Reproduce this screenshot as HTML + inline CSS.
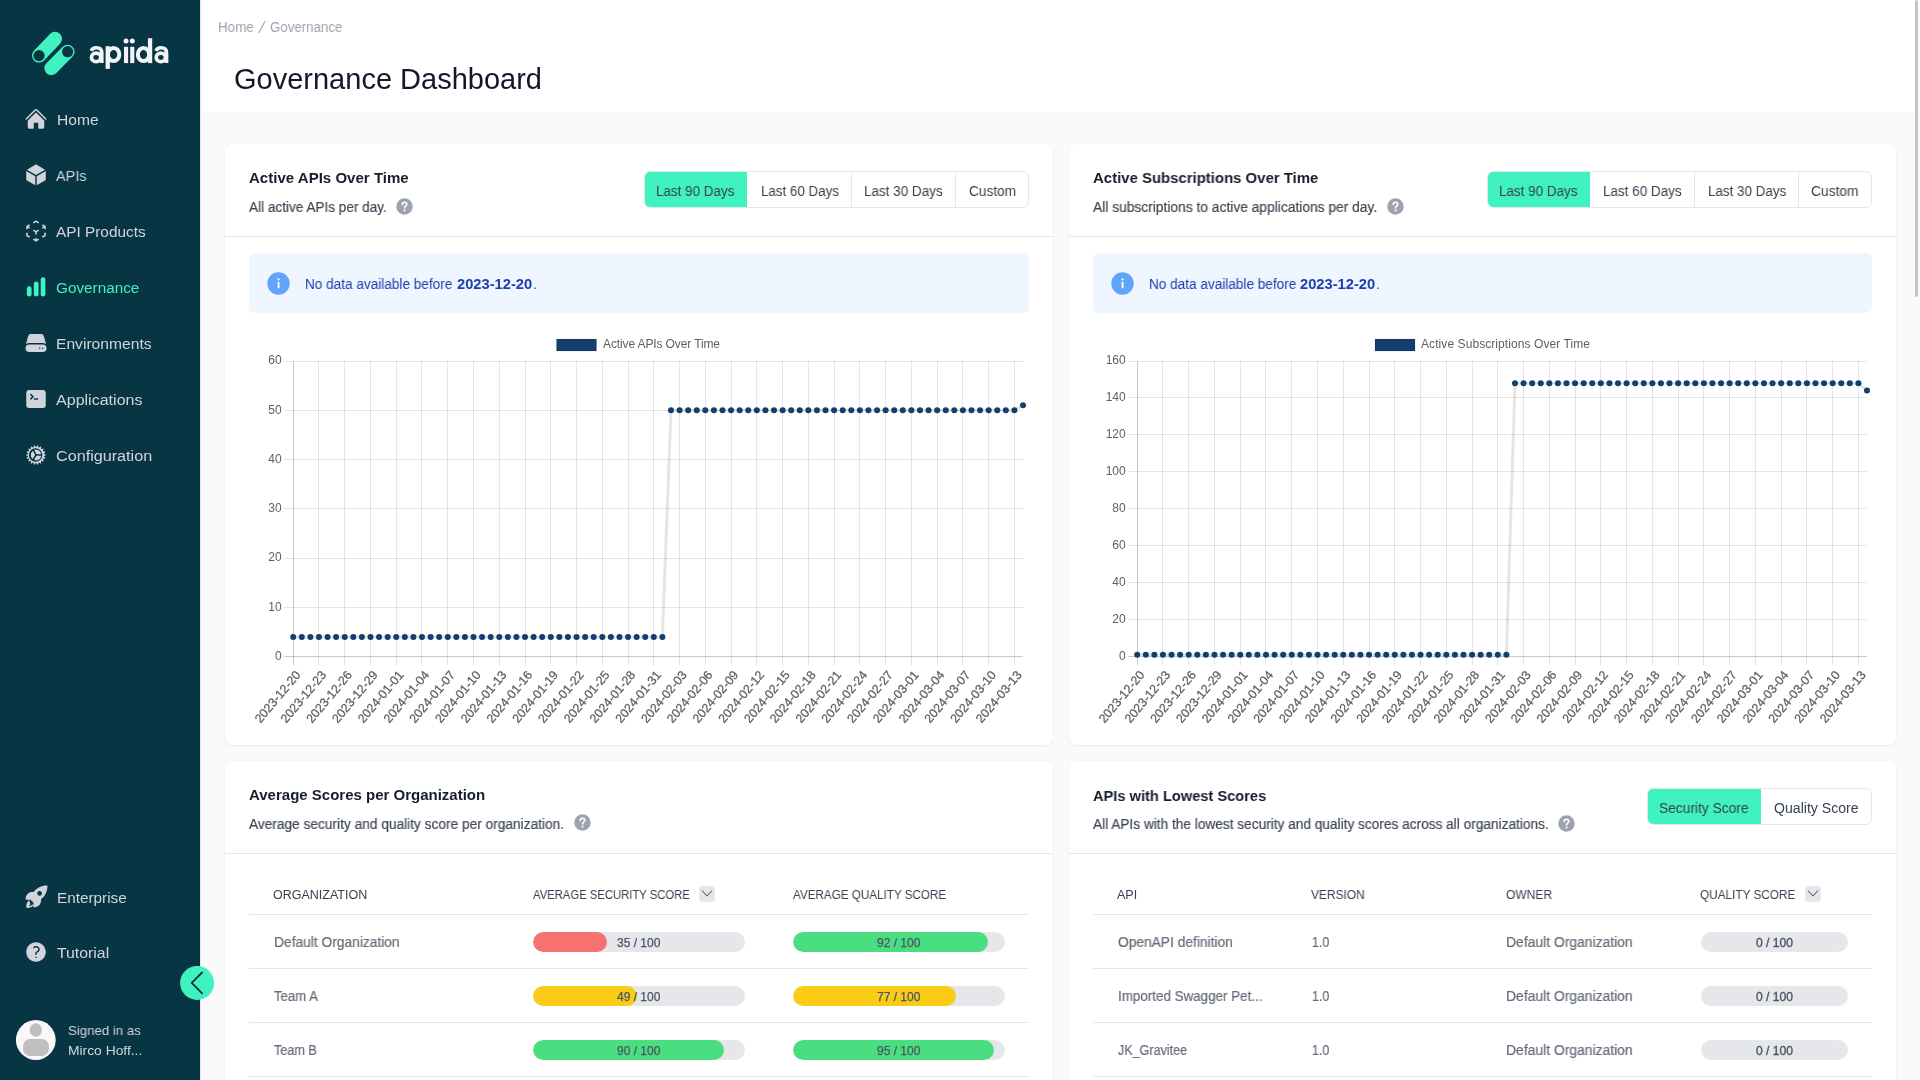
<!DOCTYPE html><html><head><meta charset="utf-8"><style>
*{box-sizing:border-box;margin:0;padding:0}
html,body{width:1920px;height:1080px;overflow:hidden;background:#f9fafb;font-family:"Liberation Sans",sans-serif;}
.abs{position:absolute}
.t{position:absolute;line-height:1;white-space:nowrap;transform-origin:0 0;will-change:transform}
.ico{position:absolute;width:24px;height:24px}
.card{position:absolute;background:#fff;border-radius:8px;box-shadow:0 1px 3px rgba(0,0,0,0.05),0 0 0 1px rgba(0,0,0,0.012)}
.hr{position:absolute;height:1px;background:#e5e7eb}
.box{position:absolute;border:1px solid #e5e7eb;border-radius:6px;overflow:hidden;background:#fff}
.help{position:absolute;width:16.5px;height:16.5px;border-radius:50%;background:#9ca3af}
.bar{position:absolute;height:20px;border-radius:10px;background:#e5e7eb;overflow:hidden}
.bar .f{position:absolute;left:0;top:0;height:20px;border-radius:10px}
.chev{position:absolute;width:16px;height:16px;border-radius:3px;background:#e5e7eb}
</style></head><body>

<div class="abs" style="left:0;top:0;width:200px;height:1080px;background:#083543"></div>
<svg class="abs" style="left:0;top:0" width="200" height="100" viewBox="0 0 200 100">
<g stroke="#3ff2c0" stroke-width="14" stroke-linecap="round">
<line x1="39" y1="55.6" x2="55" y2="38.8"/>
<line x1="67.6" y1="51.7" x2="51.4" y2="68.2"/>
</g>
<circle cx="39" cy="55.6" r="5.6" fill="#083543"/>
<circle cx="67.6" cy="51.7" r="5.6" fill="#083543"/>
<g fill="none" stroke="#f3f4f6" stroke-width="3.7">
<ellipse cx="96.1" cy="57.4" rx="4.6" ry="4.2"/>
<path d="M91.2 50.8 C92 48.7 93.9 47.75 96.4 47.75 C99.9 47.75 101.75 49.6 101.75 52.8 V63.1"/>
<ellipse cx="96.1" cy="57.4" rx="4.6" ry="4.2" transform="translate(64.75 0)"/>
<path d="M91.2 50.8 C92 48.7 93.9 47.75 96.4 47.75 C99.9 47.75 101.75 49.6 101.75 52.8 V63.1" transform="translate(64.75 0)"/>
</g>
<g fill="none" stroke="#f3f4f6" stroke-width="4">
<ellipse cx="113.6" cy="54.5" rx="5.7" ry="6.5"/>
<ellipse cx="143.5" cy="54.5" rx="5.65" ry="6.5"/>
</g>
<g fill="#f3f4f6">
<rect x="105.6" y="46.2" width="4.3" height="22.7"/>
<rect x="124" y="46.8" width="4.1" height="16.3"/>
<rect x="130.2" y="46.8" width="4.1" height="16.3"/>
<rect x="147.9" y="38.25" width="4.3" height="24.85"/>
<circle cx="126" cy="41" r="2.5"/><circle cx="132.25" cy="41" r="2.5"/>
</g>
</svg>
<svg class="ico" style="left:24px;top:107px;fill:#d1d5db" viewBox="0 0 24 24"><path d="M11.47 3.841a.75.75 0 0 1 1.06 0l8.69 8.69a.75.75 0 1 0 1.06-1.061l-8.689-8.69a2.25 2.25 0 0 0-3.182 0l-8.69 8.69a.75.75 0 1 0 1.061 1.06l8.69-8.689Z"/><path d="m12 5.432 8.159 8.159c.03.03.06.058.091.086v6.198c0 1.035-.84 1.875-1.875 1.875H15a.75.75 0 0 1-.75-.75v-4.5a.75.75 0 0 0-.75-.75h-3a.75.75 0 0 0-.75.75V21a.75.75 0 0 1-.75.75H5.625a1.875 1.875 0 0 1-1.875-1.875v-6.198a2.29 2.29 0 0 0 .091-.086L12 5.432Z"/></svg>
<div class="t" style="left:56.60px;top:112.05px;font-size:15.3px;color:#d1d5db;font-weight:normal;transform:scaleX(1.0232);">Home</div>
<svg class="ico" style="left:24px;top:163px;fill:#d1d5db" viewBox="0 0 24 24"><path d="M12.378 1.602a.75.75 0 0 0-.756 0L3 6.632l9 5.25 9-5.25-8.622-5.03ZM21.75 7.93l-9 5.25v9l8.628-5.032a.75.75 0 0 0 .372-.648V7.93ZM11.25 22.18v-9l-9-5.25v8.57a.75.75 0 0 0 .372.648l8.628 5.033Z"/></svg>
<div class="t" style="left:55.80px;top:167.85px;font-size:15.3px;color:#d1d5db;font-weight:normal;transform:scaleX(0.9432);">APIs</div>
<svg class="ico" style="left:24px;top:219px;fill:#d1d5db" viewBox="0 0 24 24"><path fill-rule="evenodd" d="M11.622 1.602a.75.75 0 0 1 .756 0l2.25 1.313a.75.75 0 0 1-.756 1.295L12 3.118 10.128 4.21a.75.75 0 1 1-.756-1.295l2.25-1.313ZM5.898 5.81a.75.75 0 0 1-.27 1.025l-1.14.665 1.14.665a.75.75 0 1 1-.756 1.295L3.75 8.806v.944a.75.75 0 0 1-1.5 0V7.5a.75.75 0 0 1 .372-.648l2.25-1.312a.75.75 0 0 1 1.026.27Zm12.204 0a.75.75 0 0 1 1.026-.27l2.25 1.312a.75.75 0 0 1 .372.648v2.25a.75.75 0 0 1-1.5 0v-.944l-1.122.654a.75.75 0 1 1-.756-1.295l1.14-.665-1.14-.665a.75.75 0 0 1-.27-1.025Zm-9 5.25a.75.75 0 0 1 1.026-.27L12 11.882l1.872-1.092a.75.75 0 1 1 .756 1.295l-1.878 1.096V15a.75.75 0 0 1-1.5 0v-1.82l-1.878-1.095a.75.75 0 0 1-.27-1.025ZM3 13.5a.75.75 0 0 1 .75.75v1.82l1.878 1.095a.75.75 0 1 1-.756 1.295l-2.25-1.312a.75.75 0 0 1-.372-.648v-2.25A.75.75 0 0 1 3 13.5Zm18 0a.75.75 0 0 1 .75.75v2.25a.75.75 0 0 1-.372.648l-2.25 1.312a.75.75 0 1 1-.756-1.295l1.878-1.096V14.25a.75.75 0 0 1 .75-.75Zm-9 5.25a.75.75 0 0 1 .75.75v.944l1.122-.654a.75.75 0 1 1 .756 1.295l-2.25 1.312a.75.75 0 0 1-.756 0l-2.25-1.312a.75.75 0 1 1 .756-1.295l1.122.654V19.5a.75.75 0 0 1 .75-.75Z" clip-rule="evenodd"/></svg>
<div class="t" style="left:55.80px;top:223.75px;font-size:15.3px;color:#d1d5db;font-weight:normal;transform:scaleX(1.0036);">API Products</div>
<svg class="abs" style="left:0;top:0" width="200" height="300" viewBox="0 0 200 300"><g fill="#3ff2c0"><rect x="26.85" y="286.2" width="4.7" height="10.4" rx="2.35"/><rect x="33.85" y="281.4" width="4.7" height="15.2" rx="2.35"/><rect x="40.7" y="277.2" width="4.7" height="19.4" rx="2.35"/></g></svg>
<div class="t" style="left:56.25px;top:279.95px;font-size:15.3px;color:#3ff2c0;font-weight:normal;transform:scaleX(0.9972);">Governance</div>
<svg class="ico" style="left:24px;top:331px;fill:#d1d5db" viewBox="0 0 24 24"><path d="M4.08 5.227A3 3 0 0 1 6.979 3H17.02a3 3 0 0 1 2.9 2.227l2.113 7.926A5.228 5.228 0 0 0 18.75 12H5.25a5.228 5.228 0 0 0-3.284 1.153L4.08 5.227Z"/><path fill-rule="evenodd" d="M5.25 13.5a3.75 3.75 0 1 0 0 7.5h13.5a3.75 3.75 0 1 0 0-7.5H5.25Zm10.5 4.5a.75.75 0 1 0 0-1.5.75.75 0 0 0 0 1.5Zm3.75-.75a.75.75 0 1 1-1.5 0 .75.75 0 0 1 1.5 0Z" clip-rule="evenodd"/></svg>
<div class="t" style="left:56.20px;top:335.85px;font-size:15.3px;color:#d1d5db;font-weight:normal;transform:scaleX(1.0218);">Environments</div>
<svg class="ico" style="left:24px;top:387px;fill:#d1d5db" viewBox="0 0 24 24"><path fill-rule="evenodd" d="M2.25 6a3 3 0 0 1 3-3h13.5a3 3 0 0 1 3 3v12a3 3 0 0 1-3 3H5.25a3 3 0 0 1-3-3V6Zm3.97.97a.75.75 0 0 1 1.06 0l2.25 2.25a.75.75 0 0 1 0 1.06l-2.25 2.25a.75.75 0 0 1-1.06-1.06l1.72-1.72-1.72-1.72a.75.75 0 0 1 0-1.06Zm4.28 4.28a.75.75 0 0 0 0 1.5h3a.75.75 0 0 0 0-1.5h-3Z" clip-rule="evenodd"/></svg>
<div class="t" style="left:56.20px;top:391.95px;font-size:15.3px;color:#d1d5db;font-weight:normal;transform:scaleX(1.0489);">Applications</div>
<svg class="ico" style="left:24px;top:443px;fill:#d1d5db" viewBox="0 0 24 24"><path d="M17.004 10.407c.138.435-.216.842-.672.842h-3.465a.75.75 0 0 1-.65-.375l-1.732-3c-.229-.396-.053-.907.393-1.004a5.252 5.252 0 0 1 6.126 3.537ZM8.12 8.464c.307-.338.838-.235 1.066.16l1.732 3a.75.75 0 0 1 0 .75l-1.732 3c-.229.397-.76.5-1.067.161A5.23 5.23 0 0 1 6.75 12a5.23 5.23 0 0 1 1.37-3.536ZM10.878 17.13c-.447-.098-.623-.608-.394-1.004l1.733-3.002a.75.75 0 0 1 .65-.375h3.465c.457 0 .81.407.672.842a5.252 5.252 0 0 1-6.126 3.539Z"/><path fill-rule="evenodd" d="M21 12.75a.75.75 0 1 0 0-1.5h-.783a8.22 8.22 0 0 0-.237-1.357l.734-.267a.75.75 0 1 0-.513-1.41l-.735.268a8.24 8.24 0 0 0-.689-1.192l.6-.503a.75.75 0 1 0-.964-1.149l-.6.504a8.3 8.3 0 0 0-1.054-.885l.391-.678a.75.75 0 1 0-1.299-.75l-.39.676a8.188 8.188 0 0 0-1.295-.47l.136-.77a.75.75 0 0 0-1.477-.26l-.136.77a8.36 8.36 0 0 0-1.377 0l-.136-.77a.75.75 0 1 0-1.477.26l.136.77c-.448.121-.88.28-1.294.47l-.39-.676a.75.75 0 0 0-1.3.75l.392.678a8.29 8.29 0 0 0-1.054.885l-.6-.504a.75.75 0 1 0-.965 1.149l.6.503a8.243 8.243 0 0 0-.689 1.192L3.8 8.216a.75.75 0 1 0-.513 1.41l.735.267a8.222 8.222 0 0 0-.238 1.356h-.783a.75.75 0 0 0 0 1.5h.783c.042.464.122.917.238 1.356l-.735.268a.75.75 0 0 0 .513 1.41l.735-.268c.197.417.428.816.69 1.191l-.6.504a.75.75 0 0 0 .963 1.15l.601-.505c.326.323.679.62 1.054.885l-.392.68a.75.75 0 0 0 1.3.75l.39-.679c.414.192.847.35 1.294.471l-.136.77a.75.75 0 0 0 1.477.261l.137-.772a8.332 8.332 0 0 0 1.376 0l.136.772a.75.75 0 1 0 1.477-.26l-.136-.771a8.19 8.19 0 0 0 1.294-.47l.391.677a.75.75 0 0 0 1.3-.75l-.393-.679a8.29 8.29 0 0 0 1.054-.885l.601.504a.75.75 0 0 0 .964-1.15l-.6-.503c.261-.375.492-.774.69-1.191l.735.267a.75.75 0 1 0 .512-1.41l-.734-.267c.115-.439.195-.892.237-1.356h.784Zm-2.657-.75a6.75 6.75 0 1 1-13.5 0 6.75 6.75 0 0 1 13.5 0Z" clip-rule="evenodd"/></svg>
<div class="t" style="left:56.20px;top:447.55px;font-size:15.3px;color:#d1d5db;font-weight:normal;transform:scaleX(1.0567);">Configuration</div>
<svg class="ico" style="left:23.5px;top:884px;fill:#d1d5db;width:25px;height:25px" viewBox="0 0 24 24"><path fill-rule="evenodd" d="M9.315 7.584C12.195 3.883 16.695 1.5 21.75 1.5a.75.75 0 0 1 .75.75c0 5.056-2.383 9.555-6.084 12.436A6.75 6.75 0 0 1 9.75 22.5a.75.75 0 0 1-.75-.75v-4.131A15.838 15.838 0 0 1 6.382 15H2.25a.75.75 0 0 1-.75-.75 6.75 6.75 0 0 1 7.815-6.666ZM15 6.75a2.25 2.25 0 1 0 0 4.5 2.25 2.25 0 0 0 0-4.5Z" clip-rule="evenodd"/><path d="M5.26 17.242a.75.75 0 1 0-1.06-1.06 7.5 7.5 0 0 0-1.964 5.86.75.75 0 0 0 .836.835 7.5 7.5 0 0 0 5.86-1.963.75.75 0 1 0-1.06-1.06 6 6 0 0 1-3.15 1.625 6 6 0 0 1 1.538-2.237Z"/></svg>
<div class="t" style="left:56.70px;top:889.95px;font-size:15.3px;color:#d1d5db;font-weight:normal;transform:scaleX(0.9962);">Enterprise</div>
<svg class="ico" style="left:24px;top:940px;fill:#d1d5db" viewBox="0 0 24 24"><path fill-rule="evenodd" d="M2.25 12c0-5.385 4.365-9.75 9.75-9.75s9.75 4.365 9.75 9.75-4.365 9.75-9.75 9.75S2.25 17.385 2.25 12Zm11.378-3.917c-.89-.777-2.366-.777-3.255 0a.75.75 0 0 1-.988-1.129c1.454-1.272 3.776-1.272 5.23 0 1.513 1.324 1.513 3.518 0 4.842a3.75 3.75 0 0 1-.837.552c-.676.328-1.028.774-1.028 1.152v.75a.75.75 0 0 1-1.5 0v-.75c0-1.279 1.06-2.107 1.875-2.502.182-.088.351-.199.503-.331.83-.727.83-1.857 0-2.584ZM12 18a.75.75 0 1 0 0-1.5.75.75 0 0 0 0 1.5Z" clip-rule="evenodd"/></svg>
<div class="t" style="left:56.70px;top:945.35px;font-size:15.3px;color:#d1d5db;font-weight:normal;transform:scaleX(1.0339);">Tutorial</div>
<svg class="abs" style="left:16px;top:1020px" width="40" height="40" viewBox="0 0 40 40"><circle cx="19.8" cy="20" r="19.9" fill="#f9f9f9"/><g fill="#bfbfbf"><ellipse cx="19.8" cy="10" rx="6.1" ry="6.8"/><rect x="7" y="18.9" width="25.9" height="17.2" rx="7"/></g></svg>
<div class="t" style="left:68.10px;top:1024.19px;font-size:13.6px;color:#d1d5db;font-weight:normal;transform:scaleX(0.9737);">Signed in as</div>
<div class="t" style="left:68.10px;top:1044.39px;font-size:13.6px;color:#d1d5db;font-weight:normal;transform:scaleX(1.0174);">Mirco Hoff...</div>
<div class="abs" style="left:200px;top:0;width:1px;height:1080px;background:#e5e7eb"></div>
<div class="abs" style="left:201px;top:0;width:1719px;height:112px;background:#fff"></div>
<div class="t" style="left:217.80px;top:20.25px;font-size:14px;color:#9ca3af;font-weight:normal;transform:scaleX(0.9577);">Home</div>
<svg class="abs" style="left:250px;top:15px" width="20" height="22" viewBox="250 15 20 22"><line x1="265.1" y1="21" x2="258.8" y2="33.1" stroke="#9ca3af" stroke-width="1.05"/></svg>
<div class="t" style="left:270.30px;top:20.25px;font-size:14px;color:#9ca3af;font-weight:normal;transform:scaleX(0.9476);">Governance</div>
<div class="t" style="left:233.90px;top:65.19px;font-size:28.6px;color:#111827;font-weight:normal;transform:scaleX(1.0144);">Governance Dashboard</div>
<svg class="abs" style="left:180px;top:966px" width="34" height="34" viewBox="0 0 34 34"><circle cx="17.1" cy="16.9" r="17" fill="#3ff2c0"/><path d="M22.1 6.5 L11.7 16.9 L22.1 27.3" fill="none" stroke="#0b3142" stroke-width="1.8" stroke-linecap="round" stroke-linejoin="round"/></svg>
<div class="card" style="left:225px;top:144px;width:827.5px;height:601px"></div>
<div class="t" style="left:249.00px;top:170.30px;font-size:15px;color:#161e2c;font-weight:bold;transform:scaleX(1.0030);">Active APIs Over Time</div>
<div class="t" style="left:249.00px;top:199.75px;font-size:14px;color:#3f4856;font-weight:normal;transform:scaleX(0.9693);-webkit-text-stroke:0.2px #3f4856;">All active APIs per day.</div>
<svg class="abs" style="left:396.3px;top:197.5px" width="17" height="17" viewBox="0 0 17 17"><circle cx="8.5" cy="8.5" r="8.2" fill="#9ca3af"/><path d="M6.2 6.6 C6.2 5.2 7.2 4.4 8.5 4.4 C9.8 4.4 10.8 5.2 10.8 6.4 C10.8 7.9 8.6 8.1 8.6 9.9" fill="none" stroke="#fff" stroke-width="1.6" stroke-linecap="round"/><circle cx="8.6" cy="12.4" r="1" fill="#fff"/></svg>
<div class="hr" style="left:225px;top:236px;width:827.5px"></div>
<div class="box" style="left:643.5px;top:171px;width:385px;height:37px"><div class="abs" style="left:0;top:0;width:102.79999999999995px;height:35px;background:#3ff2c0"></div><div class="abs" style="left:206.89999999999998px;top:0;width:1px;height:35px;background:#e5e7eb"></div><div class="abs" style="left:310.9px;top:0;width:1px;height:35px;background:#e5e7eb"></div></div><div class="t" style="left:656.40px;top:184.35px;font-size:14px;color:#374151;font-weight:normal;transform:scaleX(0.9585);">Last 90 Days</div><div class="t" style="left:760.60px;top:184.35px;font-size:14px;color:#374151;font-weight:normal;transform:scaleX(0.9536);">Last 60 Days</div><div class="t" style="left:864.20px;top:184.35px;font-size:14px;color:#374151;font-weight:normal;transform:scaleX(0.9622);">Last 30 Days</div><div class="t" style="left:968.50px;top:184.35px;font-size:14px;color:#374151;font-weight:normal;transform:scaleX(0.9766);">Custom</div>
<div class="abs" style="left:249px;top:253px;width:779.5px;height:60px;background:#eff6ff;border-radius:6px"></div>
<svg class="abs" style="left:267.4px;top:271.5px" width="23" height="23" viewBox="0 0 23 23"><circle cx="11.5" cy="11.5" r="11.2" fill="#60a5fa"/><rect x="10.6" y="10" width="1.9" height="6.2" rx="0.5" fill="#fff"/><circle cx="11.55" cy="7.4" r="1.1" fill="#fff"/></svg>
<div class="t" style="left:305.20px;top:277.25px;font-size:14px;color:#1e40af;font-weight:normal;transform:scaleX(0.9706);">No data available before</div>
<div class="t" style="left:456.90px;top:277.25px;font-size:14px;color:#1e40af;font-weight:bold;transform:scaleX(1.0501);">2023-12-20</div>
<div class="t" style="left:532.50px;top:277.25px;font-size:14px;color:#1e40af;font-weight:normal;">.</div>
<div class="card" style="left:1068.5px;top:144px;width:827.5px;height:601px"></div>
<div class="t" style="left:1092.50px;top:170.30px;font-size:15px;color:#161e2c;font-weight:bold;transform:scaleX(0.9951);">Active Subscriptions Over Time</div>
<div class="t" style="left:1092.50px;top:199.75px;font-size:14px;color:#3f4856;font-weight:normal;transform:scaleX(0.9852);-webkit-text-stroke:0.2px #3f4856;">All subscriptions to active applications per day.</div>
<svg class="abs" style="left:1386.7px;top:197.6px" width="17" height="17" viewBox="0 0 17 17"><circle cx="8.5" cy="8.5" r="8.2" fill="#9ca3af"/><path d="M6.2 6.6 C6.2 5.2 7.2 4.4 8.5 4.4 C9.8 4.4 10.8 5.2 10.8 6.4 C10.8 7.9 8.6 8.1 8.6 9.9" fill="none" stroke="#fff" stroke-width="1.6" stroke-linecap="round"/><circle cx="8.6" cy="12.4" r="1" fill="#fff"/></svg>
<div class="hr" style="left:1068.5px;top:236px;width:827.5px"></div>
<div class="box" style="left:1487px;top:171px;width:385px;height:37px"><div class="abs" style="left:0;top:0;width:101.79999999999995px;height:35px;background:#3ff2c0"></div><div class="abs" style="left:206.0999999999999px;top:0;width:1px;height:35px;background:#e5e7eb"></div><div class="abs" style="left:310.0999999999999px;top:0;width:1px;height:35px;background:#e5e7eb"></div></div><div class="t" style="left:1499.30px;top:184.35px;font-size:14px;color:#374151;font-weight:normal;transform:scaleX(0.9597);">Last 90 Days</div><div class="t" style="left:1603.40px;top:184.35px;font-size:14px;color:#374151;font-weight:normal;transform:scaleX(0.9622);">Last 60 Days</div><div class="t" style="left:1707.60px;top:184.35px;font-size:14px;color:#374151;font-weight:normal;transform:scaleX(0.9573);">Last 30 Days</div><div class="t" style="left:1811.40px;top:184.35px;font-size:14px;color:#374151;font-weight:normal;transform:scaleX(0.9849);">Custom</div>
<div class="abs" style="left:1092.5px;top:253px;width:779.5px;height:60px;background:#eff6ff;border-radius:6px"></div>
<svg class="abs" style="left:1111.2px;top:271.8px" width="23" height="23" viewBox="0 0 23 23"><circle cx="11.5" cy="11.5" r="11.2" fill="#60a5fa"/><rect x="10.6" y="10" width="1.9" height="6.2" rx="0.5" fill="#fff"/><circle cx="11.55" cy="7.4" r="1.1" fill="#fff"/></svg>
<div class="t" style="left:1148.70px;top:277.25px;font-size:14px;color:#1e40af;font-weight:normal;transform:scaleX(0.9706);">No data available before</div>
<div class="t" style="left:1300.40px;top:277.25px;font-size:14px;color:#1e40af;font-weight:bold;transform:scaleX(1.0501);">2023-12-20</div>
<div class="t" style="left:1376.00px;top:277.25px;font-size:14px;color:#1e40af;font-weight:normal;">.</div>
<svg class="abs" style="left:0;top:0;will-change:transform" width="1920" height="1080" viewBox="0 0 1920 1080" font-family="&quot;Liberation Sans&quot;, sans-serif">
<line x1="284.2" y1="656.5" x2="1023.0" y2="656.5" stroke="rgba(0,0,0,0.21)" stroke-width="1"/>
<text x="281.7" y="659.8" text-anchor="end" font-size="12" fill="#5f5f5f">0</text>
<line x1="284.2" y1="607.5" x2="1023.0" y2="607.5" stroke="rgba(0,0,0,0.1)" stroke-width="1"/>
<text x="281.7" y="610.5" text-anchor="end" font-size="12" fill="#5f5f5f">10</text>
<line x1="284.2" y1="558.5" x2="1023.0" y2="558.5" stroke="rgba(0,0,0,0.1)" stroke-width="1"/>
<text x="281.7" y="561.3" text-anchor="end" font-size="12" fill="#5f5f5f">20</text>
<line x1="284.2" y1="508.5" x2="1023.0" y2="508.5" stroke="rgba(0,0,0,0.1)" stroke-width="1"/>
<text x="281.7" y="512.0" text-anchor="end" font-size="12" fill="#5f5f5f">30</text>
<line x1="284.2" y1="459.5" x2="1023.0" y2="459.5" stroke="rgba(0,0,0,0.1)" stroke-width="1"/>
<text x="281.7" y="462.7" text-anchor="end" font-size="12" fill="#5f5f5f">40</text>
<line x1="284.2" y1="410.5" x2="1023.0" y2="410.5" stroke="rgba(0,0,0,0.1)" stroke-width="1"/>
<text x="281.7" y="413.5" text-anchor="end" font-size="12" fill="#5f5f5f">50</text>
<line x1="284.2" y1="361.5" x2="1023.0" y2="361.5" stroke="rgba(0,0,0,0.1)" stroke-width="1"/>
<text x="281.7" y="364.2" text-anchor="end" font-size="12" fill="#5f5f5f">60</text>
<line x1="293.5" y1="361.0" x2="293.5" y2="665.0" stroke="rgba(0,0,0,0.21)" stroke-width="1"/>
<text transform="translate(298.0,672.5) rotate(-50)" text-anchor="end" font-size="12.4" fill="#5f5f5f" stroke="#5f5f5f" stroke-width="0.25" dy="4.1">2023-12-20</text>
<line x1="318.5" y1="361.0" x2="318.5" y2="665.0" stroke="rgba(0,0,0,0.1)" stroke-width="1"/>
<text transform="translate(323.8,672.5) rotate(-50)" text-anchor="end" font-size="12.4" fill="#5f5f5f" stroke="#5f5f5f" stroke-width="0.25" dy="4.1">2023-12-23</text>
<line x1="344.5" y1="361.0" x2="344.5" y2="665.0" stroke="rgba(0,0,0,0.1)" stroke-width="1"/>
<text transform="translate(349.5,672.5) rotate(-50)" text-anchor="end" font-size="12.4" fill="#5f5f5f" stroke="#5f5f5f" stroke-width="0.25" dy="4.1">2023-12-26</text>
<line x1="370.5" y1="361.0" x2="370.5" y2="665.0" stroke="rgba(0,0,0,0.1)" stroke-width="1"/>
<text transform="translate(375.3,672.5) rotate(-50)" text-anchor="end" font-size="12.4" fill="#5f5f5f" stroke="#5f5f5f" stroke-width="0.25" dy="4.1">2023-12-29</text>
<line x1="396.5" y1="361.0" x2="396.5" y2="665.0" stroke="rgba(0,0,0,0.1)" stroke-width="1"/>
<text transform="translate(401.0,672.5) rotate(-50)" text-anchor="end" font-size="12.4" fill="#5f5f5f" stroke="#5f5f5f" stroke-width="0.25" dy="4.1">2024-01-01</text>
<line x1="421.5" y1="361.0" x2="421.5" y2="665.0" stroke="rgba(0,0,0,0.1)" stroke-width="1"/>
<text transform="translate(426.8,672.5) rotate(-50)" text-anchor="end" font-size="12.4" fill="#5f5f5f" stroke="#5f5f5f" stroke-width="0.25" dy="4.1">2024-01-04</text>
<line x1="447.5" y1="361.0" x2="447.5" y2="665.0" stroke="rgba(0,0,0,0.1)" stroke-width="1"/>
<text transform="translate(452.5,672.5) rotate(-50)" text-anchor="end" font-size="12.4" fill="#5f5f5f" stroke="#5f5f5f" stroke-width="0.25" dy="4.1">2024-01-07</text>
<line x1="473.5" y1="361.0" x2="473.5" y2="665.0" stroke="rgba(0,0,0,0.1)" stroke-width="1"/>
<text transform="translate(478.3,672.5) rotate(-50)" text-anchor="end" font-size="12.4" fill="#5f5f5f" stroke="#5f5f5f" stroke-width="0.25" dy="4.1">2024-01-10</text>
<line x1="499.5" y1="361.0" x2="499.5" y2="665.0" stroke="rgba(0,0,0,0.1)" stroke-width="1"/>
<text transform="translate(504.1,672.5) rotate(-50)" text-anchor="end" font-size="12.4" fill="#5f5f5f" stroke="#5f5f5f" stroke-width="0.25" dy="4.1">2024-01-13</text>
<line x1="525.5" y1="361.0" x2="525.5" y2="665.0" stroke="rgba(0,0,0,0.1)" stroke-width="1"/>
<text transform="translate(529.8,672.5) rotate(-50)" text-anchor="end" font-size="12.4" fill="#5f5f5f" stroke="#5f5f5f" stroke-width="0.25" dy="4.1">2024-01-16</text>
<line x1="550.5" y1="361.0" x2="550.5" y2="665.0" stroke="rgba(0,0,0,0.1)" stroke-width="1"/>
<text transform="translate(555.6,672.5) rotate(-50)" text-anchor="end" font-size="12.4" fill="#5f5f5f" stroke="#5f5f5f" stroke-width="0.25" dy="4.1">2024-01-19</text>
<line x1="576.5" y1="361.0" x2="576.5" y2="665.0" stroke="rgba(0,0,0,0.1)" stroke-width="1"/>
<text transform="translate(581.3,672.5) rotate(-50)" text-anchor="end" font-size="12.4" fill="#5f5f5f" stroke="#5f5f5f" stroke-width="0.25" dy="4.1">2024-01-22</text>
<line x1="602.5" y1="361.0" x2="602.5" y2="665.0" stroke="rgba(0,0,0,0.1)" stroke-width="1"/>
<text transform="translate(607.1,672.5) rotate(-50)" text-anchor="end" font-size="12.4" fill="#5f5f5f" stroke="#5f5f5f" stroke-width="0.25" dy="4.1">2024-01-25</text>
<line x1="628.5" y1="361.0" x2="628.5" y2="665.0" stroke="rgba(0,0,0,0.1)" stroke-width="1"/>
<text transform="translate(632.9,672.5) rotate(-50)" text-anchor="end" font-size="12.4" fill="#5f5f5f" stroke="#5f5f5f" stroke-width="0.25" dy="4.1">2024-01-28</text>
<line x1="653.5" y1="361.0" x2="653.5" y2="665.0" stroke="rgba(0,0,0,0.1)" stroke-width="1"/>
<text transform="translate(658.6,672.5) rotate(-50)" text-anchor="end" font-size="12.4" fill="#5f5f5f" stroke="#5f5f5f" stroke-width="0.25" dy="4.1">2024-01-31</text>
<line x1="679.5" y1="361.0" x2="679.5" y2="665.0" stroke="rgba(0,0,0,0.1)" stroke-width="1"/>
<text transform="translate(684.4,672.5) rotate(-50)" text-anchor="end" font-size="12.4" fill="#5f5f5f" stroke="#5f5f5f" stroke-width="0.25" dy="4.1">2024-02-03</text>
<line x1="705.5" y1="361.0" x2="705.5" y2="665.0" stroke="rgba(0,0,0,0.1)" stroke-width="1"/>
<text transform="translate(710.1,672.5) rotate(-50)" text-anchor="end" font-size="12.4" fill="#5f5f5f" stroke="#5f5f5f" stroke-width="0.25" dy="4.1">2024-02-06</text>
<line x1="731.5" y1="361.0" x2="731.5" y2="665.0" stroke="rgba(0,0,0,0.1)" stroke-width="1"/>
<text transform="translate(735.9,672.5) rotate(-50)" text-anchor="end" font-size="12.4" fill="#5f5f5f" stroke="#5f5f5f" stroke-width="0.25" dy="4.1">2024-02-09</text>
<line x1="756.5" y1="361.0" x2="756.5" y2="665.0" stroke="rgba(0,0,0,0.1)" stroke-width="1"/>
<text transform="translate(761.6,672.5) rotate(-50)" text-anchor="end" font-size="12.4" fill="#5f5f5f" stroke="#5f5f5f" stroke-width="0.25" dy="4.1">2024-02-12</text>
<line x1="782.5" y1="361.0" x2="782.5" y2="665.0" stroke="rgba(0,0,0,0.1)" stroke-width="1"/>
<text transform="translate(787.4,672.5) rotate(-50)" text-anchor="end" font-size="12.4" fill="#5f5f5f" stroke="#5f5f5f" stroke-width="0.25" dy="4.1">2024-02-15</text>
<line x1="808.5" y1="361.0" x2="808.5" y2="665.0" stroke="rgba(0,0,0,0.1)" stroke-width="1"/>
<text transform="translate(813.2,672.5) rotate(-50)" text-anchor="end" font-size="12.4" fill="#5f5f5f" stroke="#5f5f5f" stroke-width="0.25" dy="4.1">2024-02-18</text>
<line x1="834.5" y1="361.0" x2="834.5" y2="665.0" stroke="rgba(0,0,0,0.1)" stroke-width="1"/>
<text transform="translate(838.9,672.5) rotate(-50)" text-anchor="end" font-size="12.4" fill="#5f5f5f" stroke="#5f5f5f" stroke-width="0.25" dy="4.1">2024-02-21</text>
<line x1="859.5" y1="361.0" x2="859.5" y2="665.0" stroke="rgba(0,0,0,0.1)" stroke-width="1"/>
<text transform="translate(864.7,672.5) rotate(-50)" text-anchor="end" font-size="12.4" fill="#5f5f5f" stroke="#5f5f5f" stroke-width="0.25" dy="4.1">2024-02-24</text>
<line x1="885.5" y1="361.0" x2="885.5" y2="665.0" stroke="rgba(0,0,0,0.1)" stroke-width="1"/>
<text transform="translate(890.4,672.5) rotate(-50)" text-anchor="end" font-size="12.4" fill="#5f5f5f" stroke="#5f5f5f" stroke-width="0.25" dy="4.1">2024-02-27</text>
<line x1="911.5" y1="361.0" x2="911.5" y2="665.0" stroke="rgba(0,0,0,0.1)" stroke-width="1"/>
<text transform="translate(916.2,672.5) rotate(-50)" text-anchor="end" font-size="12.4" fill="#5f5f5f" stroke="#5f5f5f" stroke-width="0.25" dy="4.1">2024-03-01</text>
<line x1="937.5" y1="361.0" x2="937.5" y2="665.0" stroke="rgba(0,0,0,0.1)" stroke-width="1"/>
<text transform="translate(942.0,672.5) rotate(-50)" text-anchor="end" font-size="12.4" fill="#5f5f5f" stroke="#5f5f5f" stroke-width="0.25" dy="4.1">2024-03-04</text>
<line x1="962.5" y1="361.0" x2="962.5" y2="665.0" stroke="rgba(0,0,0,0.1)" stroke-width="1"/>
<text transform="translate(967.7,672.5) rotate(-50)" text-anchor="end" font-size="12.4" fill="#5f5f5f" stroke="#5f5f5f" stroke-width="0.25" dy="4.1">2024-03-07</text>
<line x1="988.5" y1="361.0" x2="988.5" y2="665.0" stroke="rgba(0,0,0,0.1)" stroke-width="1"/>
<text transform="translate(993.5,672.5) rotate(-50)" text-anchor="end" font-size="12.4" fill="#5f5f5f" stroke="#5f5f5f" stroke-width="0.25" dy="4.1">2024-03-10</text>
<line x1="1014.5" y1="361.0" x2="1014.5" y2="665.0" stroke="rgba(0,0,0,0.1)" stroke-width="1"/>
<text transform="translate(1019.2,672.5) rotate(-50)" text-anchor="end" font-size="12.4" fill="#5f5f5f" stroke="#5f5f5f" stroke-width="0.25" dy="4.1">2024-03-13</text>
<polyline points="293.20,636.89 301.79,636.89 310.37,636.89 318.96,636.89 327.54,636.89 336.13,636.89 344.72,636.89 353.30,636.89 361.89,636.89 370.47,636.89 379.06,636.89 387.65,636.89 396.23,636.89 404.82,636.89 413.40,636.89 421.99,636.89 430.58,636.89 439.16,636.89 447.75,636.89 456.33,636.89 464.92,636.89 473.51,636.89 482.09,636.89 490.68,636.89 499.26,636.89 507.85,636.89 516.44,636.89 525.02,636.89 533.61,636.89 542.19,636.89 550.78,636.89 559.37,636.89 567.95,636.89 576.54,636.89 585.12,636.89 593.71,636.89 602.30,636.89 610.88,636.89 619.47,636.89 628.05,636.89 636.64,636.89 645.23,636.89 653.81,636.89 662.40,636.89 670.98,410.27 679.57,410.27 688.16,410.27 696.74,410.27 705.33,410.27 713.91,410.27 722.50,410.27 731.09,410.27 739.67,410.27 748.26,410.27 756.84,410.27 765.43,410.27 774.02,410.27 782.60,410.27 791.19,410.27 799.77,410.27 808.36,410.27 816.95,410.27 825.53,410.27 834.12,410.27 842.70,410.27 851.29,410.27 859.88,410.27 868.46,410.27 877.05,410.27 885.63,410.27 894.22,410.27 902.81,410.27 911.39,410.27 919.98,410.27 928.56,410.27 937.15,410.27 945.74,410.27 954.32,410.27 962.91,410.27 971.49,410.27 980.08,410.27 988.67,410.27 997.25,410.27 1005.84,410.27 1014.42,410.27 1023.01,405.34" fill="none" stroke="rgba(0,0,0,0.1)" stroke-width="3"/>
<circle cx="293.20" cy="636.89" r="3" fill="#123f6e"/>
<circle cx="301.79" cy="636.89" r="3" fill="#123f6e"/>
<circle cx="310.37" cy="636.89" r="3" fill="#123f6e"/>
<circle cx="318.96" cy="636.89" r="3" fill="#123f6e"/>
<circle cx="327.54" cy="636.89" r="3" fill="#123f6e"/>
<circle cx="336.13" cy="636.89" r="3" fill="#123f6e"/>
<circle cx="344.72" cy="636.89" r="3" fill="#123f6e"/>
<circle cx="353.30" cy="636.89" r="3" fill="#123f6e"/>
<circle cx="361.89" cy="636.89" r="3" fill="#123f6e"/>
<circle cx="370.47" cy="636.89" r="3" fill="#123f6e"/>
<circle cx="379.06" cy="636.89" r="3" fill="#123f6e"/>
<circle cx="387.65" cy="636.89" r="3" fill="#123f6e"/>
<circle cx="396.23" cy="636.89" r="3" fill="#123f6e"/>
<circle cx="404.82" cy="636.89" r="3" fill="#123f6e"/>
<circle cx="413.40" cy="636.89" r="3" fill="#123f6e"/>
<circle cx="421.99" cy="636.89" r="3" fill="#123f6e"/>
<circle cx="430.58" cy="636.89" r="3" fill="#123f6e"/>
<circle cx="439.16" cy="636.89" r="3" fill="#123f6e"/>
<circle cx="447.75" cy="636.89" r="3" fill="#123f6e"/>
<circle cx="456.33" cy="636.89" r="3" fill="#123f6e"/>
<circle cx="464.92" cy="636.89" r="3" fill="#123f6e"/>
<circle cx="473.51" cy="636.89" r="3" fill="#123f6e"/>
<circle cx="482.09" cy="636.89" r="3" fill="#123f6e"/>
<circle cx="490.68" cy="636.89" r="3" fill="#123f6e"/>
<circle cx="499.26" cy="636.89" r="3" fill="#123f6e"/>
<circle cx="507.85" cy="636.89" r="3" fill="#123f6e"/>
<circle cx="516.44" cy="636.89" r="3" fill="#123f6e"/>
<circle cx="525.02" cy="636.89" r="3" fill="#123f6e"/>
<circle cx="533.61" cy="636.89" r="3" fill="#123f6e"/>
<circle cx="542.19" cy="636.89" r="3" fill="#123f6e"/>
<circle cx="550.78" cy="636.89" r="3" fill="#123f6e"/>
<circle cx="559.37" cy="636.89" r="3" fill="#123f6e"/>
<circle cx="567.95" cy="636.89" r="3" fill="#123f6e"/>
<circle cx="576.54" cy="636.89" r="3" fill="#123f6e"/>
<circle cx="585.12" cy="636.89" r="3" fill="#123f6e"/>
<circle cx="593.71" cy="636.89" r="3" fill="#123f6e"/>
<circle cx="602.30" cy="636.89" r="3" fill="#123f6e"/>
<circle cx="610.88" cy="636.89" r="3" fill="#123f6e"/>
<circle cx="619.47" cy="636.89" r="3" fill="#123f6e"/>
<circle cx="628.05" cy="636.89" r="3" fill="#123f6e"/>
<circle cx="636.64" cy="636.89" r="3" fill="#123f6e"/>
<circle cx="645.23" cy="636.89" r="3" fill="#123f6e"/>
<circle cx="653.81" cy="636.89" r="3" fill="#123f6e"/>
<circle cx="662.40" cy="636.89" r="3" fill="#123f6e"/>
<circle cx="670.98" cy="410.27" r="3" fill="#123f6e"/>
<circle cx="679.57" cy="410.27" r="3" fill="#123f6e"/>
<circle cx="688.16" cy="410.27" r="3" fill="#123f6e"/>
<circle cx="696.74" cy="410.27" r="3" fill="#123f6e"/>
<circle cx="705.33" cy="410.27" r="3" fill="#123f6e"/>
<circle cx="713.91" cy="410.27" r="3" fill="#123f6e"/>
<circle cx="722.50" cy="410.27" r="3" fill="#123f6e"/>
<circle cx="731.09" cy="410.27" r="3" fill="#123f6e"/>
<circle cx="739.67" cy="410.27" r="3" fill="#123f6e"/>
<circle cx="748.26" cy="410.27" r="3" fill="#123f6e"/>
<circle cx="756.84" cy="410.27" r="3" fill="#123f6e"/>
<circle cx="765.43" cy="410.27" r="3" fill="#123f6e"/>
<circle cx="774.02" cy="410.27" r="3" fill="#123f6e"/>
<circle cx="782.60" cy="410.27" r="3" fill="#123f6e"/>
<circle cx="791.19" cy="410.27" r="3" fill="#123f6e"/>
<circle cx="799.77" cy="410.27" r="3" fill="#123f6e"/>
<circle cx="808.36" cy="410.27" r="3" fill="#123f6e"/>
<circle cx="816.95" cy="410.27" r="3" fill="#123f6e"/>
<circle cx="825.53" cy="410.27" r="3" fill="#123f6e"/>
<circle cx="834.12" cy="410.27" r="3" fill="#123f6e"/>
<circle cx="842.70" cy="410.27" r="3" fill="#123f6e"/>
<circle cx="851.29" cy="410.27" r="3" fill="#123f6e"/>
<circle cx="859.88" cy="410.27" r="3" fill="#123f6e"/>
<circle cx="868.46" cy="410.27" r="3" fill="#123f6e"/>
<circle cx="877.05" cy="410.27" r="3" fill="#123f6e"/>
<circle cx="885.63" cy="410.27" r="3" fill="#123f6e"/>
<circle cx="894.22" cy="410.27" r="3" fill="#123f6e"/>
<circle cx="902.81" cy="410.27" r="3" fill="#123f6e"/>
<circle cx="911.39" cy="410.27" r="3" fill="#123f6e"/>
<circle cx="919.98" cy="410.27" r="3" fill="#123f6e"/>
<circle cx="928.56" cy="410.27" r="3" fill="#123f6e"/>
<circle cx="937.15" cy="410.27" r="3" fill="#123f6e"/>
<circle cx="945.74" cy="410.27" r="3" fill="#123f6e"/>
<circle cx="954.32" cy="410.27" r="3" fill="#123f6e"/>
<circle cx="962.91" cy="410.27" r="3" fill="#123f6e"/>
<circle cx="971.49" cy="410.27" r="3" fill="#123f6e"/>
<circle cx="980.08" cy="410.27" r="3" fill="#123f6e"/>
<circle cx="988.67" cy="410.27" r="3" fill="#123f6e"/>
<circle cx="997.25" cy="410.27" r="3" fill="#123f6e"/>
<circle cx="1005.84" cy="410.27" r="3" fill="#123f6e"/>
<circle cx="1014.42" cy="410.27" r="3" fill="#123f6e"/>
<circle cx="1023.01" cy="405.34" r="3" fill="#123f6e"/>
<rect x="556.5" y="339" width="40" height="12" fill="#123f6e" stroke="rgba(0,0,0,0.1)" stroke-width="1"/>
<text x="603" y="347.7" font-size="12" fill="#5f5f5f" textLength="117" lengthAdjust="spacing">Active APIs Over Time</text>
<line x1="1128.2" y1="656.5" x2="1867.0" y2="656.5" stroke="rgba(0,0,0,0.21)" stroke-width="1"/>
<text x="1125.7" y="659.8" text-anchor="end" font-size="12" fill="#5f5f5f">0</text>
<line x1="1128.2" y1="619.5" x2="1867.0" y2="619.5" stroke="rgba(0,0,0,0.1)" stroke-width="1"/>
<text x="1125.7" y="622.9" text-anchor="end" font-size="12" fill="#5f5f5f">20</text>
<line x1="1128.2" y1="582.5" x2="1867.0" y2="582.5" stroke="rgba(0,0,0,0.1)" stroke-width="1"/>
<text x="1125.7" y="585.9" text-anchor="end" font-size="12" fill="#5f5f5f">40</text>
<line x1="1128.2" y1="545.5" x2="1867.0" y2="545.5" stroke="rgba(0,0,0,0.1)" stroke-width="1"/>
<text x="1125.7" y="549.0" text-anchor="end" font-size="12" fill="#5f5f5f">60</text>
<line x1="1128.2" y1="508.5" x2="1867.0" y2="508.5" stroke="rgba(0,0,0,0.1)" stroke-width="1"/>
<text x="1125.7" y="512.0" text-anchor="end" font-size="12" fill="#5f5f5f">80</text>
<line x1="1128.2" y1="471.5" x2="1867.0" y2="471.5" stroke="rgba(0,0,0,0.1)" stroke-width="1"/>
<text x="1125.7" y="475.1" text-anchor="end" font-size="12" fill="#5f5f5f">100</text>
<line x1="1128.2" y1="434.5" x2="1867.0" y2="434.5" stroke="rgba(0,0,0,0.1)" stroke-width="1"/>
<text x="1125.7" y="438.1" text-anchor="end" font-size="12" fill="#5f5f5f">120</text>
<line x1="1128.2" y1="397.5" x2="1867.0" y2="397.5" stroke="rgba(0,0,0,0.1)" stroke-width="1"/>
<text x="1125.7" y="401.2" text-anchor="end" font-size="12" fill="#5f5f5f">140</text>
<line x1="1128.2" y1="361.5" x2="1867.0" y2="361.5" stroke="rgba(0,0,0,0.1)" stroke-width="1"/>
<text x="1125.7" y="364.2" text-anchor="end" font-size="12" fill="#5f5f5f">160</text>
<line x1="1137.5" y1="361.0" x2="1137.5" y2="665.0" stroke="rgba(0,0,0,0.21)" stroke-width="1"/>
<text transform="translate(1142.0,672.5) rotate(-50)" text-anchor="end" font-size="12.4" fill="#5f5f5f" stroke="#5f5f5f" stroke-width="0.25" dy="4.1">2023-12-20</text>
<line x1="1162.5" y1="361.0" x2="1162.5" y2="665.0" stroke="rgba(0,0,0,0.1)" stroke-width="1"/>
<text transform="translate(1167.8,672.5) rotate(-50)" text-anchor="end" font-size="12.4" fill="#5f5f5f" stroke="#5f5f5f" stroke-width="0.25" dy="4.1">2023-12-23</text>
<line x1="1188.5" y1="361.0" x2="1188.5" y2="665.0" stroke="rgba(0,0,0,0.1)" stroke-width="1"/>
<text transform="translate(1193.5,672.5) rotate(-50)" text-anchor="end" font-size="12.4" fill="#5f5f5f" stroke="#5f5f5f" stroke-width="0.25" dy="4.1">2023-12-26</text>
<line x1="1214.5" y1="361.0" x2="1214.5" y2="665.0" stroke="rgba(0,0,0,0.1)" stroke-width="1"/>
<text transform="translate(1219.3,672.5) rotate(-50)" text-anchor="end" font-size="12.4" fill="#5f5f5f" stroke="#5f5f5f" stroke-width="0.25" dy="4.1">2023-12-29</text>
<line x1="1240.5" y1="361.0" x2="1240.5" y2="665.0" stroke="rgba(0,0,0,0.1)" stroke-width="1"/>
<text transform="translate(1245.0,672.5) rotate(-50)" text-anchor="end" font-size="12.4" fill="#5f5f5f" stroke="#5f5f5f" stroke-width="0.25" dy="4.1">2024-01-01</text>
<line x1="1265.5" y1="361.0" x2="1265.5" y2="665.0" stroke="rgba(0,0,0,0.1)" stroke-width="1"/>
<text transform="translate(1270.8,672.5) rotate(-50)" text-anchor="end" font-size="12.4" fill="#5f5f5f" stroke="#5f5f5f" stroke-width="0.25" dy="4.1">2024-01-04</text>
<line x1="1291.5" y1="361.0" x2="1291.5" y2="665.0" stroke="rgba(0,0,0,0.1)" stroke-width="1"/>
<text transform="translate(1296.5,672.5) rotate(-50)" text-anchor="end" font-size="12.4" fill="#5f5f5f" stroke="#5f5f5f" stroke-width="0.25" dy="4.1">2024-01-07</text>
<line x1="1317.5" y1="361.0" x2="1317.5" y2="665.0" stroke="rgba(0,0,0,0.1)" stroke-width="1"/>
<text transform="translate(1322.3,672.5) rotate(-50)" text-anchor="end" font-size="12.4" fill="#5f5f5f" stroke="#5f5f5f" stroke-width="0.25" dy="4.1">2024-01-10</text>
<line x1="1343.5" y1="361.0" x2="1343.5" y2="665.0" stroke="rgba(0,0,0,0.1)" stroke-width="1"/>
<text transform="translate(1348.1,672.5) rotate(-50)" text-anchor="end" font-size="12.4" fill="#5f5f5f" stroke="#5f5f5f" stroke-width="0.25" dy="4.1">2024-01-13</text>
<line x1="1369.5" y1="361.0" x2="1369.5" y2="665.0" stroke="rgba(0,0,0,0.1)" stroke-width="1"/>
<text transform="translate(1373.8,672.5) rotate(-50)" text-anchor="end" font-size="12.4" fill="#5f5f5f" stroke="#5f5f5f" stroke-width="0.25" dy="4.1">2024-01-16</text>
<line x1="1394.5" y1="361.0" x2="1394.5" y2="665.0" stroke="rgba(0,0,0,0.1)" stroke-width="1"/>
<text transform="translate(1399.6,672.5) rotate(-50)" text-anchor="end" font-size="12.4" fill="#5f5f5f" stroke="#5f5f5f" stroke-width="0.25" dy="4.1">2024-01-19</text>
<line x1="1420.5" y1="361.0" x2="1420.5" y2="665.0" stroke="rgba(0,0,0,0.1)" stroke-width="1"/>
<text transform="translate(1425.3,672.5) rotate(-50)" text-anchor="end" font-size="12.4" fill="#5f5f5f" stroke="#5f5f5f" stroke-width="0.25" dy="4.1">2024-01-22</text>
<line x1="1446.5" y1="361.0" x2="1446.5" y2="665.0" stroke="rgba(0,0,0,0.1)" stroke-width="1"/>
<text transform="translate(1451.1,672.5) rotate(-50)" text-anchor="end" font-size="12.4" fill="#5f5f5f" stroke="#5f5f5f" stroke-width="0.25" dy="4.1">2024-01-25</text>
<line x1="1472.5" y1="361.0" x2="1472.5" y2="665.0" stroke="rgba(0,0,0,0.1)" stroke-width="1"/>
<text transform="translate(1476.9,672.5) rotate(-50)" text-anchor="end" font-size="12.4" fill="#5f5f5f" stroke="#5f5f5f" stroke-width="0.25" dy="4.1">2024-01-28</text>
<line x1="1497.5" y1="361.0" x2="1497.5" y2="665.0" stroke="rgba(0,0,0,0.1)" stroke-width="1"/>
<text transform="translate(1502.6,672.5) rotate(-50)" text-anchor="end" font-size="12.4" fill="#5f5f5f" stroke="#5f5f5f" stroke-width="0.25" dy="4.1">2024-01-31</text>
<line x1="1523.5" y1="361.0" x2="1523.5" y2="665.0" stroke="rgba(0,0,0,0.1)" stroke-width="1"/>
<text transform="translate(1528.4,672.5) rotate(-50)" text-anchor="end" font-size="12.4" fill="#5f5f5f" stroke="#5f5f5f" stroke-width="0.25" dy="4.1">2024-02-03</text>
<line x1="1549.5" y1="361.0" x2="1549.5" y2="665.0" stroke="rgba(0,0,0,0.1)" stroke-width="1"/>
<text transform="translate(1554.1,672.5) rotate(-50)" text-anchor="end" font-size="12.4" fill="#5f5f5f" stroke="#5f5f5f" stroke-width="0.25" dy="4.1">2024-02-06</text>
<line x1="1575.5" y1="361.0" x2="1575.5" y2="665.0" stroke="rgba(0,0,0,0.1)" stroke-width="1"/>
<text transform="translate(1579.9,672.5) rotate(-50)" text-anchor="end" font-size="12.4" fill="#5f5f5f" stroke="#5f5f5f" stroke-width="0.25" dy="4.1">2024-02-09</text>
<line x1="1600.5" y1="361.0" x2="1600.5" y2="665.0" stroke="rgba(0,0,0,0.1)" stroke-width="1"/>
<text transform="translate(1605.6,672.5) rotate(-50)" text-anchor="end" font-size="12.4" fill="#5f5f5f" stroke="#5f5f5f" stroke-width="0.25" dy="4.1">2024-02-12</text>
<line x1="1626.5" y1="361.0" x2="1626.5" y2="665.0" stroke="rgba(0,0,0,0.1)" stroke-width="1"/>
<text transform="translate(1631.4,672.5) rotate(-50)" text-anchor="end" font-size="12.4" fill="#5f5f5f" stroke="#5f5f5f" stroke-width="0.25" dy="4.1">2024-02-15</text>
<line x1="1652.5" y1="361.0" x2="1652.5" y2="665.0" stroke="rgba(0,0,0,0.1)" stroke-width="1"/>
<text transform="translate(1657.2,672.5) rotate(-50)" text-anchor="end" font-size="12.4" fill="#5f5f5f" stroke="#5f5f5f" stroke-width="0.25" dy="4.1">2024-02-18</text>
<line x1="1678.5" y1="361.0" x2="1678.5" y2="665.0" stroke="rgba(0,0,0,0.1)" stroke-width="1"/>
<text transform="translate(1682.9,672.5) rotate(-50)" text-anchor="end" font-size="12.4" fill="#5f5f5f" stroke="#5f5f5f" stroke-width="0.25" dy="4.1">2024-02-21</text>
<line x1="1703.5" y1="361.0" x2="1703.5" y2="665.0" stroke="rgba(0,0,0,0.1)" stroke-width="1"/>
<text transform="translate(1708.7,672.5) rotate(-50)" text-anchor="end" font-size="12.4" fill="#5f5f5f" stroke="#5f5f5f" stroke-width="0.25" dy="4.1">2024-02-24</text>
<line x1="1729.5" y1="361.0" x2="1729.5" y2="665.0" stroke="rgba(0,0,0,0.1)" stroke-width="1"/>
<text transform="translate(1734.4,672.5) rotate(-50)" text-anchor="end" font-size="12.4" fill="#5f5f5f" stroke="#5f5f5f" stroke-width="0.25" dy="4.1">2024-02-27</text>
<line x1="1755.5" y1="361.0" x2="1755.5" y2="665.0" stroke="rgba(0,0,0,0.1)" stroke-width="1"/>
<text transform="translate(1760.2,672.5) rotate(-50)" text-anchor="end" font-size="12.4" fill="#5f5f5f" stroke="#5f5f5f" stroke-width="0.25" dy="4.1">2024-03-01</text>
<line x1="1781.5" y1="361.0" x2="1781.5" y2="665.0" stroke="rgba(0,0,0,0.1)" stroke-width="1"/>
<text transform="translate(1786.0,672.5) rotate(-50)" text-anchor="end" font-size="12.4" fill="#5f5f5f" stroke="#5f5f5f" stroke-width="0.25" dy="4.1">2024-03-04</text>
<line x1="1806.5" y1="361.0" x2="1806.5" y2="665.0" stroke="rgba(0,0,0,0.1)" stroke-width="1"/>
<text transform="translate(1811.7,672.5) rotate(-50)" text-anchor="end" font-size="12.4" fill="#5f5f5f" stroke="#5f5f5f" stroke-width="0.25" dy="4.1">2024-03-07</text>
<line x1="1832.5" y1="361.0" x2="1832.5" y2="665.0" stroke="rgba(0,0,0,0.1)" stroke-width="1"/>
<text transform="translate(1837.5,672.5) rotate(-50)" text-anchor="end" font-size="12.4" fill="#5f5f5f" stroke="#5f5f5f" stroke-width="0.25" dy="4.1">2024-03-10</text>
<line x1="1858.5" y1="361.0" x2="1858.5" y2="665.0" stroke="rgba(0,0,0,0.1)" stroke-width="1"/>
<text transform="translate(1863.2,672.5) rotate(-50)" text-anchor="end" font-size="12.4" fill="#5f5f5f" stroke="#5f5f5f" stroke-width="0.25" dy="4.1">2024-03-13</text>
<polyline points="1137.20,654.75 1145.79,654.75 1154.37,654.75 1162.96,654.75 1171.54,654.75 1180.13,654.75 1188.72,654.75 1197.30,654.75 1205.89,654.75 1214.47,654.75 1223.06,654.75 1231.65,654.75 1240.23,654.75 1248.82,654.75 1257.40,654.75 1265.99,654.75 1274.58,654.75 1283.16,654.75 1291.75,654.75 1300.33,654.75 1308.92,654.75 1317.51,654.75 1326.09,654.75 1334.68,654.75 1343.26,654.75 1351.85,654.75 1360.44,654.75 1369.02,654.75 1377.61,654.75 1386.19,654.75 1394.78,654.75 1403.37,654.75 1411.95,654.75 1420.54,654.75 1429.12,654.75 1437.71,654.75 1446.30,654.75 1454.88,654.75 1463.47,654.75 1472.05,654.75 1480.64,654.75 1489.23,654.75 1497.81,654.75 1506.40,654.75 1514.98,383.17 1523.57,383.17 1532.16,383.17 1540.74,383.17 1549.33,383.17 1557.91,383.17 1566.50,383.17 1575.09,383.17 1583.67,383.17 1592.26,383.17 1600.84,383.17 1609.43,383.17 1618.02,383.17 1626.60,383.17 1635.19,383.17 1643.77,383.17 1652.36,383.17 1660.95,383.17 1669.53,383.17 1678.12,383.17 1686.70,383.17 1695.29,383.17 1703.88,383.17 1712.46,383.17 1721.05,383.17 1729.63,383.17 1738.22,383.17 1746.81,383.17 1755.39,383.17 1763.98,383.17 1772.56,383.17 1781.15,383.17 1789.74,383.17 1798.32,383.17 1806.91,383.17 1815.49,383.17 1824.08,383.17 1832.67,383.17 1841.25,383.17 1849.84,383.17 1858.42,383.17 1867.01,390.56" fill="none" stroke="rgba(0,0,0,0.1)" stroke-width="3"/>
<circle cx="1137.20" cy="654.75" r="3" fill="#123f6e"/>
<circle cx="1145.79" cy="654.75" r="3" fill="#123f6e"/>
<circle cx="1154.37" cy="654.75" r="3" fill="#123f6e"/>
<circle cx="1162.96" cy="654.75" r="3" fill="#123f6e"/>
<circle cx="1171.54" cy="654.75" r="3" fill="#123f6e"/>
<circle cx="1180.13" cy="654.75" r="3" fill="#123f6e"/>
<circle cx="1188.72" cy="654.75" r="3" fill="#123f6e"/>
<circle cx="1197.30" cy="654.75" r="3" fill="#123f6e"/>
<circle cx="1205.89" cy="654.75" r="3" fill="#123f6e"/>
<circle cx="1214.47" cy="654.75" r="3" fill="#123f6e"/>
<circle cx="1223.06" cy="654.75" r="3" fill="#123f6e"/>
<circle cx="1231.65" cy="654.75" r="3" fill="#123f6e"/>
<circle cx="1240.23" cy="654.75" r="3" fill="#123f6e"/>
<circle cx="1248.82" cy="654.75" r="3" fill="#123f6e"/>
<circle cx="1257.40" cy="654.75" r="3" fill="#123f6e"/>
<circle cx="1265.99" cy="654.75" r="3" fill="#123f6e"/>
<circle cx="1274.58" cy="654.75" r="3" fill="#123f6e"/>
<circle cx="1283.16" cy="654.75" r="3" fill="#123f6e"/>
<circle cx="1291.75" cy="654.75" r="3" fill="#123f6e"/>
<circle cx="1300.33" cy="654.75" r="3" fill="#123f6e"/>
<circle cx="1308.92" cy="654.75" r="3" fill="#123f6e"/>
<circle cx="1317.51" cy="654.75" r="3" fill="#123f6e"/>
<circle cx="1326.09" cy="654.75" r="3" fill="#123f6e"/>
<circle cx="1334.68" cy="654.75" r="3" fill="#123f6e"/>
<circle cx="1343.26" cy="654.75" r="3" fill="#123f6e"/>
<circle cx="1351.85" cy="654.75" r="3" fill="#123f6e"/>
<circle cx="1360.44" cy="654.75" r="3" fill="#123f6e"/>
<circle cx="1369.02" cy="654.75" r="3" fill="#123f6e"/>
<circle cx="1377.61" cy="654.75" r="3" fill="#123f6e"/>
<circle cx="1386.19" cy="654.75" r="3" fill="#123f6e"/>
<circle cx="1394.78" cy="654.75" r="3" fill="#123f6e"/>
<circle cx="1403.37" cy="654.75" r="3" fill="#123f6e"/>
<circle cx="1411.95" cy="654.75" r="3" fill="#123f6e"/>
<circle cx="1420.54" cy="654.75" r="3" fill="#123f6e"/>
<circle cx="1429.12" cy="654.75" r="3" fill="#123f6e"/>
<circle cx="1437.71" cy="654.75" r="3" fill="#123f6e"/>
<circle cx="1446.30" cy="654.75" r="3" fill="#123f6e"/>
<circle cx="1454.88" cy="654.75" r="3" fill="#123f6e"/>
<circle cx="1463.47" cy="654.75" r="3" fill="#123f6e"/>
<circle cx="1472.05" cy="654.75" r="3" fill="#123f6e"/>
<circle cx="1480.64" cy="654.75" r="3" fill="#123f6e"/>
<circle cx="1489.23" cy="654.75" r="3" fill="#123f6e"/>
<circle cx="1497.81" cy="654.75" r="3" fill="#123f6e"/>
<circle cx="1506.40" cy="654.75" r="3" fill="#123f6e"/>
<circle cx="1514.98" cy="383.17" r="3" fill="#123f6e"/>
<circle cx="1523.57" cy="383.17" r="3" fill="#123f6e"/>
<circle cx="1532.16" cy="383.17" r="3" fill="#123f6e"/>
<circle cx="1540.74" cy="383.17" r="3" fill="#123f6e"/>
<circle cx="1549.33" cy="383.17" r="3" fill="#123f6e"/>
<circle cx="1557.91" cy="383.17" r="3" fill="#123f6e"/>
<circle cx="1566.50" cy="383.17" r="3" fill="#123f6e"/>
<circle cx="1575.09" cy="383.17" r="3" fill="#123f6e"/>
<circle cx="1583.67" cy="383.17" r="3" fill="#123f6e"/>
<circle cx="1592.26" cy="383.17" r="3" fill="#123f6e"/>
<circle cx="1600.84" cy="383.17" r="3" fill="#123f6e"/>
<circle cx="1609.43" cy="383.17" r="3" fill="#123f6e"/>
<circle cx="1618.02" cy="383.17" r="3" fill="#123f6e"/>
<circle cx="1626.60" cy="383.17" r="3" fill="#123f6e"/>
<circle cx="1635.19" cy="383.17" r="3" fill="#123f6e"/>
<circle cx="1643.77" cy="383.17" r="3" fill="#123f6e"/>
<circle cx="1652.36" cy="383.17" r="3" fill="#123f6e"/>
<circle cx="1660.95" cy="383.17" r="3" fill="#123f6e"/>
<circle cx="1669.53" cy="383.17" r="3" fill="#123f6e"/>
<circle cx="1678.12" cy="383.17" r="3" fill="#123f6e"/>
<circle cx="1686.70" cy="383.17" r="3" fill="#123f6e"/>
<circle cx="1695.29" cy="383.17" r="3" fill="#123f6e"/>
<circle cx="1703.88" cy="383.17" r="3" fill="#123f6e"/>
<circle cx="1712.46" cy="383.17" r="3" fill="#123f6e"/>
<circle cx="1721.05" cy="383.17" r="3" fill="#123f6e"/>
<circle cx="1729.63" cy="383.17" r="3" fill="#123f6e"/>
<circle cx="1738.22" cy="383.17" r="3" fill="#123f6e"/>
<circle cx="1746.81" cy="383.17" r="3" fill="#123f6e"/>
<circle cx="1755.39" cy="383.17" r="3" fill="#123f6e"/>
<circle cx="1763.98" cy="383.17" r="3" fill="#123f6e"/>
<circle cx="1772.56" cy="383.17" r="3" fill="#123f6e"/>
<circle cx="1781.15" cy="383.17" r="3" fill="#123f6e"/>
<circle cx="1789.74" cy="383.17" r="3" fill="#123f6e"/>
<circle cx="1798.32" cy="383.17" r="3" fill="#123f6e"/>
<circle cx="1806.91" cy="383.17" r="3" fill="#123f6e"/>
<circle cx="1815.49" cy="383.17" r="3" fill="#123f6e"/>
<circle cx="1824.08" cy="383.17" r="3" fill="#123f6e"/>
<circle cx="1832.67" cy="383.17" r="3" fill="#123f6e"/>
<circle cx="1841.25" cy="383.17" r="3" fill="#123f6e"/>
<circle cx="1849.84" cy="383.17" r="3" fill="#123f6e"/>
<circle cx="1858.42" cy="383.17" r="3" fill="#123f6e"/>
<circle cx="1867.01" cy="390.56" r="3" fill="#123f6e"/>
<rect x="1375" y="339" width="40" height="12" fill="#123f6e" stroke="rgba(0,0,0,0.1)" stroke-width="1"/>
<text x="1421" y="347.7" font-size="12" fill="#5f5f5f" textLength="169" lengthAdjust="spacing">Active Subscriptions Over Time</text>
</svg>
<div class="card" style="left:225px;top:761px;width:827.5px;height:400px"></div>
<div class="t" style="left:249.40px;top:787.00px;font-size:15px;color:#161e2c;font-weight:bold;">Average Scores per Organization</div>
<div class="t" style="left:249.40px;top:817.25px;font-size:14px;color:#3f4856;font-weight:normal;transform:scaleX(0.9785);-webkit-text-stroke:0.2px #3f4856;">Average security and quality score per organization.</div>
<svg class="abs" style="left:574.3px;top:814.2px" width="17" height="17" viewBox="0 0 17 17"><circle cx="8.5" cy="8.5" r="8.2" fill="#9ca3af"/><path d="M6.2 6.6 C6.2 5.2 7.2 4.4 8.5 4.4 C9.8 4.4 10.8 5.2 10.8 6.4 C10.8 7.9 8.6 8.1 8.6 9.9" fill="none" stroke="#fff" stroke-width="1.6" stroke-linecap="round"/><circle cx="8.6" cy="12.4" r="1" fill="#fff"/></svg>
<div class="hr" style="left:225px;top:853px;width:827.5px"></div>
<div class="t" style="left:273.00px;top:889.12px;font-size:12.5px;color:#374151;font-weight:normal;">ORGANIZATION</div>
<div class="t" style="left:532.90px;top:889.12px;font-size:12.5px;color:#374151;font-weight:normal;transform:scaleX(0.9018);">AVERAGE SECURITY SCORE</div>
<div class="chev" style="left:699.3px;top:886.2px"><svg width="16" height="16" viewBox="0 0 16 16"><path d="M3.2 4.9L8 9.9L12.8 4.9" fill="none" stroke="#6b7280" stroke-width="1.1" stroke-linecap="round" stroke-linejoin="round"/></svg></div>
<div class="t" style="left:793.00px;top:889.12px;font-size:12.5px;color:#374151;font-weight:normal;transform:scaleX(0.9331);">AVERAGE QUALITY SCORE</div>
<div class="hr" style="left:249px;top:914px;width:780px"></div>
<div class="t" style="left:273.75px;top:935.45px;font-size:14px;color:#636b78;font-weight:normal;transform:scaleX(0.9846);-webkit-text-stroke:0.2px #636b78;">Default Organization</div>
<div class="bar" style="left:533px;top:932px;width:212px"><div class="f" style="width:35%;background:#f87171"></div></div>
<div class="t" style="left:617.30px;top:936.84px;font-size:12px;color:#4b5563;font-weight:normal;-webkit-text-stroke:0.25px #4b5563;">35 / 100</div>
<div class="bar" style="left:793px;top:932px;width:212px"><div class="f" style="width:92%;background:#4ade80"></div></div>
<div class="t" style="left:877.30px;top:936.84px;font-size:12px;color:#4b5563;font-weight:normal;-webkit-text-stroke:0.25px #4b5563;">92 / 100</div>
<div class="hr" style="left:249px;top:968px;width:780px"></div>
<div class="t" style="left:273.75px;top:989.45px;font-size:14px;color:#636b78;font-weight:normal;transform:scaleX(0.9420);-webkit-text-stroke:0.2px #636b78;">Team A</div>
<div class="bar" style="left:533px;top:986px;width:212px"><div class="f" style="width:49%;background:#facc15"></div></div>
<div class="t" style="left:617.30px;top:990.84px;font-size:12px;color:#4b5563;font-weight:normal;-webkit-text-stroke:0.25px #4b5563;">49 / 100</div>
<div class="bar" style="left:793px;top:986px;width:212px"><div class="f" style="width:77%;background:#facc15"></div></div>
<div class="t" style="left:877.30px;top:990.84px;font-size:12px;color:#4b5563;font-weight:normal;-webkit-text-stroke:0.25px #4b5563;">77 / 100</div>
<div class="hr" style="left:249px;top:1022px;width:780px"></div>
<div class="t" style="left:273.75px;top:1043.25px;font-size:14px;color:#636b78;font-weight:normal;transform:scaleX(0.9029);-webkit-text-stroke:0.2px #636b78;">Team B</div>
<div class="bar" style="left:533px;top:1040px;width:212px"><div class="f" style="width:90%;background:#4ade80"></div></div>
<div class="t" style="left:617.30px;top:1044.84px;font-size:12px;color:#4b5563;font-weight:normal;-webkit-text-stroke:0.25px #4b5563;">90 / 100</div>
<div class="bar" style="left:793px;top:1040px;width:212px"><div class="f" style="width:95%;background:#4ade80"></div></div>
<div class="t" style="left:877.30px;top:1044.84px;font-size:12px;color:#4b5563;font-weight:normal;-webkit-text-stroke:0.25px #4b5563;">95 / 100</div>
<div class="hr" style="left:249px;top:1076px;width:780px"></div>
<div class="card" style="left:1068.5px;top:761px;width:827.5px;height:400px"></div>
<div class="t" style="left:1092.80px;top:787.60px;font-size:15px;color:#161e2c;font-weight:bold;transform:scaleX(0.9756);">APIs with Lowest Scores</div>
<div class="t" style="left:1092.80px;top:817.15px;font-size:14px;color:#3f4856;font-weight:normal;transform:scaleX(0.9760);-webkit-text-stroke:0.2px #3f4856;">All APIs with the lowest security and quality scores across all organizations.</div>
<svg class="abs" style="left:1558.3px;top:814.5px" width="17" height="17" viewBox="0 0 17 17"><circle cx="8.5" cy="8.5" r="8.2" fill="#9ca3af"/><path d="M6.2 6.6 C6.2 5.2 7.2 4.4 8.5 4.4 C9.8 4.4 10.8 5.2 10.8 6.4 C10.8 7.9 8.6 8.1 8.6 9.9" fill="none" stroke="#fff" stroke-width="1.6" stroke-linecap="round"/><circle cx="8.6" cy="12.4" r="1" fill="#fff"/></svg>
<div class="box" style="left:1646.5px;top:788px;width:225px;height:37px"><div class="abs" style="left:0;top:0;width:113.5px;height:35px;background:#3ff2c0"></div><div class="abs" style="left:223.75px;top:0;width:1px;height:35px;background:#e5e7eb"></div></div><div class="t" style="left:1659.40px;top:801.25px;font-size:14px;color:#374151;font-weight:normal;transform:scaleX(0.9839);">Security Score</div><div class="t" style="left:1774.40px;top:801.25px;font-size:14px;color:#374151;font-weight:normal;transform:scaleX(1.0063);">Quality Score</div>
<div class="hr" style="left:1068.5px;top:853px;width:827.5px"></div>
<div class="t" style="left:1116.90px;top:889.12px;font-size:12.5px;color:#374151;font-weight:normal;">API</div>
<div class="t" style="left:1310.80px;top:889.12px;font-size:12.5px;color:#374151;font-weight:normal;transform:scaleX(0.9547);">VERSION</div>
<div class="t" style="left:1505.60px;top:889.12px;font-size:12.5px;color:#374151;font-weight:normal;transform:scaleX(0.9617);">OWNER</div>
<div class="t" style="left:1700.40px;top:889.12px;font-size:12.5px;color:#374151;font-weight:normal;transform:scaleX(0.9428);">QUALITY SCORE</div>
<div class="chev" style="left:1804.7px;top:886.2px"><svg width="16" height="16" viewBox="0 0 16 16"><path d="M3.2 4.9L8 9.9L12.8 4.9" fill="none" stroke="#6b7280" stroke-width="1.1" stroke-linecap="round" stroke-linejoin="round"/></svg></div>
<div class="hr" style="left:1092.5px;top:914px;width:779.5px"></div>
<div class="t" style="left:1117.50px;top:935.45px;font-size:14px;color:#636b78;font-weight:normal;transform:scaleX(0.9832);-webkit-text-stroke:0.2px #636b78;">OpenAPI definition</div>
<div class="t" style="left:1312.00px;top:935.45px;font-size:14px;color:#636b78;font-weight:normal;transform:scaleX(0.8839);-webkit-text-stroke:0.2px #636b78;">1.0</div>
<div class="t" style="left:1505.60px;top:935.45px;font-size:14px;color:#636b78;font-weight:normal;transform:scaleX(0.9929);-webkit-text-stroke:0.2px #636b78;">Default Organization</div>
<div class="bar" style="left:1700.5px;top:932px;width:147px"></div>
<div class="t" style="left:1755.50px;top:936.84px;font-size:12px;color:#4b5563;font-weight:normal;transform:scaleX(1.0076);-webkit-text-stroke:0.35px #4b5563;">0 / 100</div>
<div class="hr" style="left:1092.5px;top:968px;width:779.5px"></div>
<div class="t" style="left:1117.50px;top:989.45px;font-size:14px;color:#636b78;font-weight:normal;transform:scaleX(0.9570);-webkit-text-stroke:0.2px #636b78;">Imported Swagger Pet...</div>
<div class="t" style="left:1312.00px;top:989.45px;font-size:14px;color:#636b78;font-weight:normal;transform:scaleX(0.8839);-webkit-text-stroke:0.2px #636b78;">1.0</div>
<div class="t" style="left:1505.60px;top:989.45px;font-size:14px;color:#636b78;font-weight:normal;transform:scaleX(0.9929);-webkit-text-stroke:0.2px #636b78;">Default Organization</div>
<div class="bar" style="left:1700.5px;top:986px;width:147px"></div>
<div class="t" style="left:1755.50px;top:990.84px;font-size:12px;color:#4b5563;font-weight:normal;transform:scaleX(1.0076);-webkit-text-stroke:0.35px #4b5563;">0 / 100</div>
<div class="hr" style="left:1092.5px;top:1022px;width:779.5px"></div>
<div class="t" style="left:1117.50px;top:1043.25px;font-size:14px;color:#636b78;font-weight:normal;transform:scaleX(0.8966);-webkit-text-stroke:0.2px #636b78;">JK_Gravitee</div>
<div class="t" style="left:1312.00px;top:1043.25px;font-size:14px;color:#636b78;font-weight:normal;transform:scaleX(0.8839);-webkit-text-stroke:0.2px #636b78;">1.0</div>
<div class="t" style="left:1505.60px;top:1043.25px;font-size:14px;color:#636b78;font-weight:normal;transform:scaleX(0.9929);-webkit-text-stroke:0.2px #636b78;">Default Organization</div>
<div class="bar" style="left:1700.5px;top:1040px;width:147px"></div>
<div class="t" style="left:1755.50px;top:1044.84px;font-size:12px;color:#4b5563;font-weight:normal;transform:scaleX(1.0076);-webkit-text-stroke:0.35px #4b5563;">0 / 100</div>
<div class="hr" style="left:1092.5px;top:1076px;width:779.5px"></div>
<div class="abs" style="left:1915px;top:0;width:3px;height:297px;border-radius:1.5px;background:#c4c4c4"></div>
</body></html>
